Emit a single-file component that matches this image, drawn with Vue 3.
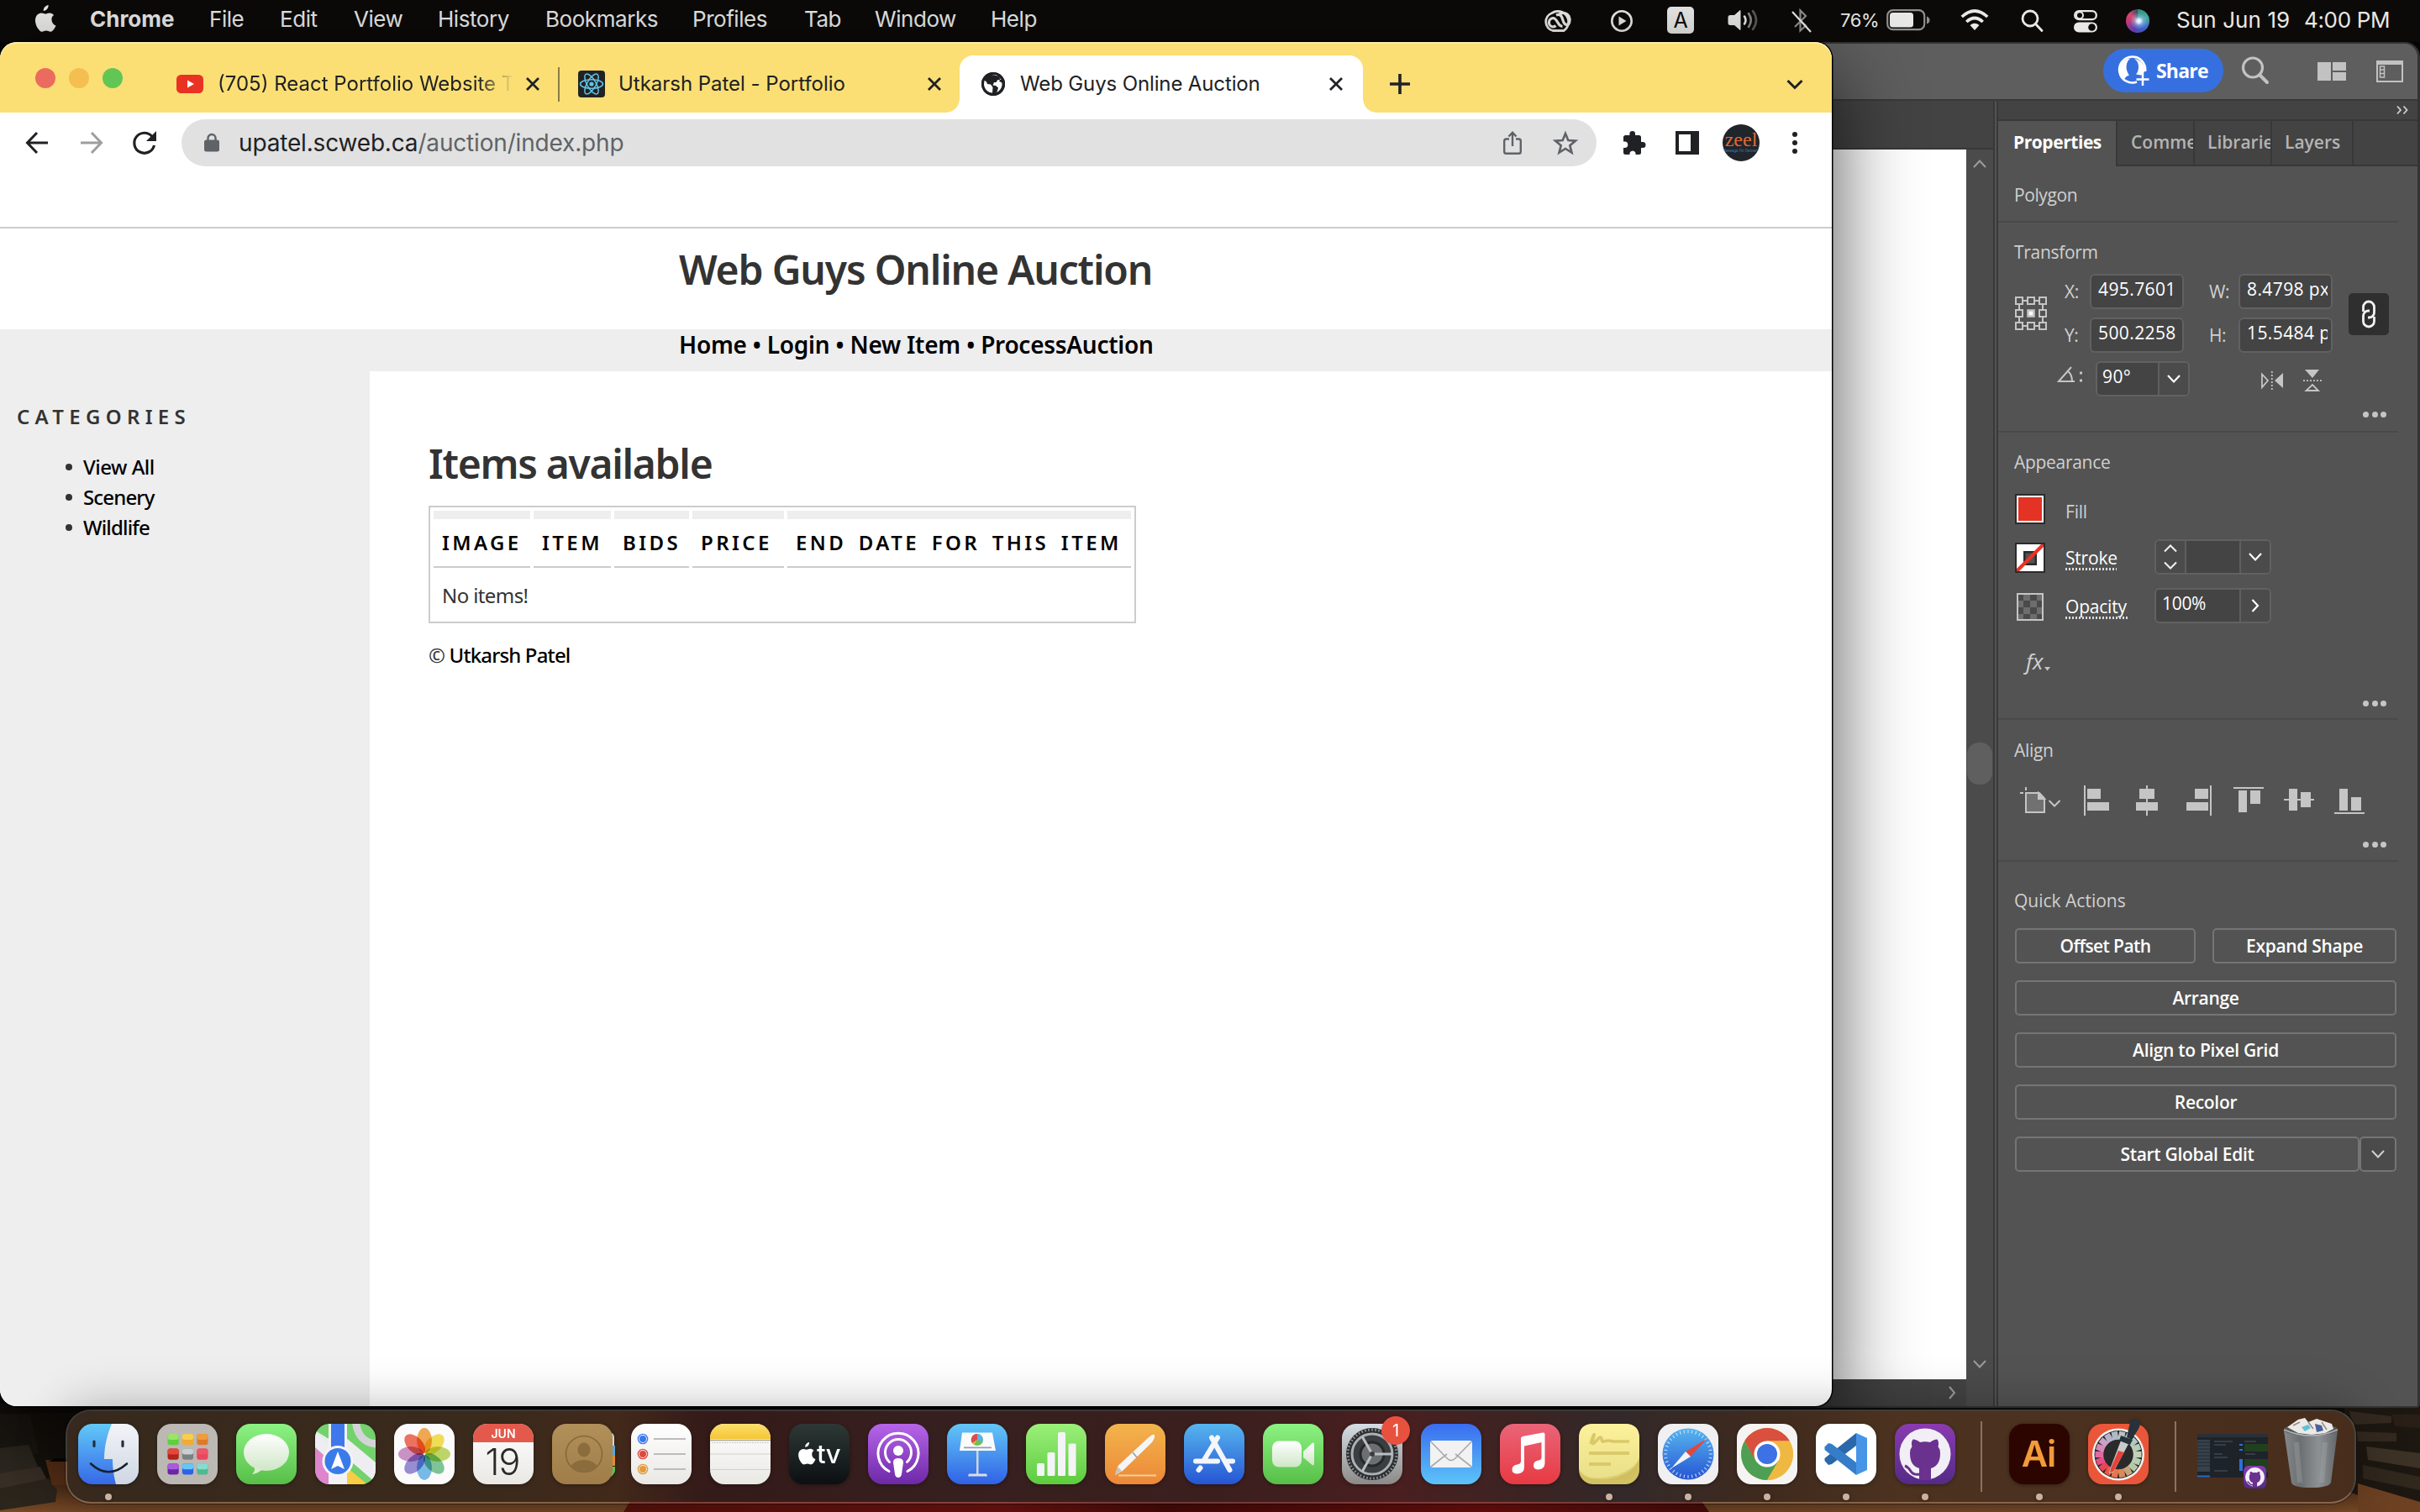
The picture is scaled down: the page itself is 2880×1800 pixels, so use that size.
<script setup>
const menus = ['File', 'Edit', 'View', 'History', 'Bookmarks', 'Profiles', 'Tab', 'Window', 'Help']
const categories = ['View All', 'Scenery', 'Wildlife']
const columns = ['Image', 'Item', 'Bids', 'Price', 'End date for this item']
const actions = ['Arrange', 'Align to Pixel Grid', 'Recolor']
const launchTiles = [
  ['#9be36a', '#5fcf3c'], ['#f6cf4d', '#efab35'], ['#ef9c3c', '#dd7a2c'],
  ['#e5483a', '#b3241b'], ['#c9d0d3', '#7b8083'], ['#ef5566', '#e8485d'],
  ['#a95be0', '#6b25a8'], ['#63c8f5', '#2b62e8'], ['#86dcd0', '#4fb98f'],
]
const petals = ['#f2a03a', '#f3dc3f', '#b8d455', '#6fc08a', '#69b3e8', '#8b7fd0', '#c784c0', '#f0604a']
const ticks = Array.from({ length: 36 }, (_, i) => i * 10)
const teeth = Array.from({ length: 45 }, (_, i) => i * 8)
const wheel = ['#b9c4c6', '#b5c9cf', '#b3c8c0', '#b9cdb9', '#c2d3b8', '#b8cdb4', '#b5c9a8', '#c6a57e', '#d98a5c', '#e8764a', '#ea5a44', '#e8445a', '#e64f86', '#e06aa0', '#d98ab8', '#c9a2c6', '#b9b0c9', '#aebac6']
</script>

<template>
  <div class="desktop">
    <svg class="wall" width="2880" height="130" viewBox="0 0 2880 130">
      <defs>
        <linearGradient id="wood" x1="0" y1="0" x2="0" y2="1"><stop offset="0" stop-color="#4a2c18" /><stop offset="1" stop-color="#7a4b27" /></linearGradient>
        <linearGradient id="rug" x1="0" y1="0" x2="1" y2="0"><stop offset="0" stop-color="#5c120c" /><stop offset=".35" stop-color="#6e1410" /><stop offset=".5" stop-color="#4a0b08" /><stop offset=".8" stop-color="#6a0f0d" /><stop offset="1" stop-color="#4a0d0a" /></linearGradient>
      </defs>
      <rect width="2880" height="130" fill="#120e0a" />
      <rect y="98" width="2880" height="32" fill="url(#wood)" />
      <path d="M750 117H2025L2034 130H742z" fill="url(#rug)" />
      <path d="M0 12H90V98H0z" fill="#17130d" />
      <path d="M0 14H36L46 60 0 66z" fill="#1c1813" />
      <path d="M0 54L34 50 46 78 0 86z" fill="#2e2820" />
      <path d="M0 84L48 76 56 92 0 104z" fill="#3a3127" />
      <path d="M0 102L58 90 68 104 66 118 0 128z" fill="#2d261d" />
      <path d="M54 68H90V98H62z" fill="#5a3118" />
      <path d="M66 66H90V70H58z" fill="#070504" />
      <path d="M2790 6H2880V130H2860L2790 104z" fill="#1d1711" />
      <path d="M2796 10L2846 16V24L2800 26zM2804 34L2852 36V46L2806 46z" fill="#33291f" />
      <path d="M2846 14H2880V30L2850 28z" fill="#291f17" />
      <path d="M2816 52L2880 60V78L2818 68z" fill="#3d3226" />
      <path d="M2812 74L2880 88V104L2812 90z" fill="#30271d" />
      <path d="M2806 96L2880 118V130H2806z" fill="#6d4122" />
    </svg>

    <!-- menu bar -->
    <header class="menubar">
      <svg class="apple" width="26" height="32" viewBox="0 0 26 32"><path fill="#e8e8e6" d="M17.6 0c.3 3.500-2.600 7-5.900 6.900C11.400 3.600 14.500.3 17.600 0zM21.400 16.900c0-3.200 2.400-4.700 2.600-4.900-1.500-2.200-3.800-2.500-4.700-2.600-2.200-.2-4 1.200-5.200 1.200s-2.900-1.200-4.700-1.100C6.900 9.500 4.600 10.900 3.300 13.100.6 17.600 2.600 24.300 5.200 28c1.300 1.800 2.800 3.900 4.800 3.800 1.900-.1 2.600-1.200 5-1.200s3 1.200 5 1.200c2.100 0 3.400-1.800 4.600-3.700 1-1.500 1.300-2.200 1.900-3.700-2.900-1.100-5.100-3.700-5.100-7.500z" /></svg>
      <nav class="menus"><b>Chrome</b><span v-for="m in menus" :key="m">{{ m }}</span></nav>
      <div class="status">
        <svg class="s-cc" width="40" height="30" viewBox="0 0 40 30" fill="none" stroke="#e8e8e6" stroke-width="2.800"><path d="M12 6.500A11.500 11.500 0 1 1 26 27.500H13A11 11 0 0 1 12 6.500z" /><path d="M24.500 22.500C18 22 19 12.500 13 12.500a5.300 5.300 0 0 0 0 10.500c1.500 0 2.500-.5 3.500-1.500M17 9c6-2.500 7 3 8.500 7.500s6 5.500 7.200 1-.5-11-7.200-11c-3 0-5 1.500-6 3" stroke-width="3.200" /></svg>
        <svg class="s-play" width="28" height="28" viewBox="0 0 28 28"><circle cx="14" cy="14" r="11.700" fill="none" stroke="#e8e8e6" stroke-width="2.600" /><path d="M10.500 8.500v11l9-5.500z" fill="#e8e8e6" /></svg>
        <span class="s-a">A</span>
        <svg class="s-vol" width="38" height="28" viewBox="0 0 38 28" fill="none" stroke="#e8e8e6" stroke-width="2.600" stroke-linecap="round"><path d="M1 10q0-1.500 1.500-1.500H8L15 2.500v23L8 19.500H2.500Q1 19.500 1 18z" fill="#e8e8e6" stroke-width="1" /><path d="M20 9.500q3 4.500 0 9" /><path d="M25 6q5.500 8 0 16" stroke="#8a8a88" /><path d="M30 3q8 11 0 22" stroke="#5a5a58" /></svg>
        <svg class="s-bt" width="24" height="30" viewBox="0 0 24 30" fill="none" stroke="#8f8f8d" stroke-width="2.200"><path d="M4 22L17 9 10.500 2.500v24L17 20.500 11 15" /><path d="M1 4L23 28" stroke="#e8e8e6" /></svg>
        <span class="s-pct">76%</span>
        <svg class="s-bat" width="52" height="26" viewBox="0 0 52 26"><rect x="1.200" y="1.200" width="44" height="23" rx="6.500" fill="none" stroke="#8f8f8d" stroke-width="2.200" /><rect x="4" y="4" width="28" height="17.500" rx="3.500" fill="#e8e8e6" /><path d="M48 8.500q3.500 1.500 3.500 4.500t-3.500 4.500z" fill="#8f8f8d" /></svg>
        <svg class="s-wifi" width="34" height="26" viewBox="0 0 34 26" fill="none" stroke="#e8e8e6" stroke-width="3.700"><path d="M1.800 9Q17-5 32.200 9" /><path d="M7.300 15Q17 6 26.700 15" /><path d="M17 25l-5.500-6q5.500-4.500 11 0z" fill="#e8e8e6" stroke="none" /></svg>
        <svg class="s-find" width="28" height="28" viewBox="0 0 28 28" fill="none" stroke="#e8e8e6" stroke-width="2.800" stroke-linecap="round"><circle cx="11" cy="11" r="9" /><path d="M17.500 17.500L25 25.500" /></svg>
        <svg class="s-ctl" width="28" height="27" viewBox="0 0 28 27"><rect x="1.200" y="1.200" width="25.600" height="10" rx="5" fill="none" stroke="#e8e8e6" stroke-width="2.300" /><circle cx="7" cy="6.200" r="4" fill="none" stroke="#e8e8e6" stroke-width="2" /><rect x="0" y="14.500" width="28" height="12" rx="6" fill="#e8e8e6" /><circle cx="21.500" cy="20.500" r="4.300" fill="#0b0a08" /></svg>
        <i class="s-siri"></i>
        <span class="s-date">Sun Jun 19</span><span class="s-time">4:00 PM</span>
      </div>
    </header>

    <!-- illustrator window -->
    <section class="ai">
      <div class="ai-top">
        <button class="share">
          <svg width="38" height="38" viewBox="0 0 38 38" fill="none" stroke="#fff" stroke-width="2.600"><path d="M24 32.500A15.500 15.500 0 1 1 34 20" /><path d="M9 7Q3.500 12 3.500 19.500T9 29.500Q11 25.500 15 24.500 12 21 11.500 15 11.500 7 17 4.500q-5 0-8 2.500zM20 4.500q6 2.500 6 10.500 0 5-3 8.500l6 1Q33.500 22 33.500 17.500 32.500 7 20 4.500z" fill="#fff" stroke="none" /><path d="M31 22v15M23.500 29.500h15" stroke-width="2.500" /></svg>
          Share
        </button>
        <svg class="ai-find" width="34" height="34" viewBox="0 0 34 34" fill="none" stroke="#c2c2c2" stroke-width="3.200" stroke-linecap="round"><circle cx="14" cy="13.500" r="11.500" /><path d="M22 22L31 31" stroke-width="4" /></svg>
        <svg class="ai-lay" width="34" height="22" viewBox="0 0 34 22" fill="#c2c2c2"><path d="M0 0h16v22H0zM18 0h16v10H18zM18 12h16v10H18z" /></svg>
        <svg class="ai-pan" width="32" height="26" viewBox="0 0 32 26"><path d="M1 1h30v24H1z" fill="none" stroke="#c2c2c2" stroke-width="2" /><path d="M0 0h32v5H0z" fill="#c2c2c2" /><path d="M4.500 7h5v13h-5z" fill="none" stroke="#c2c2c2" stroke-width="1.500" /><path d="M4 11h6M4 15.500h6" stroke="#c2c2c2" stroke-width="1.500" /></svg>
      </div>
      <div class="ai-main">
        <div class="doc">
          <div class="doc-tabs"></div>
          <div class="doc-body">
            <div class="canvas"></div>
            <div class="vscroll">
              <svg width="16" height="10" viewBox="0 0 16 10" fill="none" stroke="#9c9c9c" stroke-width="2"><path d="M1 9L8 1.500 15 9" /></svg>
              <i class="thumb"></i>
              <svg width="16" height="10" viewBox="0 0 16 10" fill="none" stroke="#9c9c9c" stroke-width="2"><path d="M1 1L8 8.500 15 1" /></svg>
            </div>
          </div>
          <div class="hscroll"><svg width="9" height="16" viewBox="0 0 9 16" fill="none" stroke="#9c9c9c" stroke-width="2"><path d="M1 1L7 8 1 15" /></svg><i></i></div>
        </div>
        <aside class="props">
          <div class="collapse"><svg width="14" height="10" viewBox="0 0 14 10" fill="none" stroke="#cfcfcf" stroke-width="1.800"><path d="M1 .5L5 5 1 9.500M8.500 .5l4 4.500-4 4.500" /></svg></div>
          <div class="ptabs"><b class="on">Properties</b><b>Comme</b><b>Librarie</b><b>Layers</b><b class="rest"></b></div>

          <div class="sec poly">Polygon</div>

          <div class="sec transform">
            <h3>Transform</h3>
            <div class="tgrid">
              <svg class="refpt" width="38" height="40" viewBox="0 0 38 40" fill="none" stroke="#c5c5c5" stroke-width="2"><path d="M5 5H33V35H5z" /><g fill="#535353"><path d="M1 1h8v8H1zM15 1h8v8h-8zM29 1h8v8h-8zM1 16h8v8H1zM29 16h8v8h-8zM1 31h8v8H1zM15 31h8v8h-8zM29 31h8v8h-8z" /></g><path d="M15.500 16.500h7v7h-7z" fill="#fff" stroke-width="2.500" /></svg>
              <div class="fields">
                <label>X:</label><span class="inp">495.7601</span><label>W:</label><span class="inp"><em>8.4798 px</em></span>
                <label>Y:</label><span class="inp">500.2258</span><label>H:</label><span class="inp"><em>15.5484 p</em></span>
              </div>
              <span class="chain"><svg width="18" height="34" viewBox="0 0 18 34" fill="none" stroke="#f2f2f2" stroke-width="2.800"><path d="M2.500 14V8.500a6.500 6.500 0 0 1 13 0V15a6 6 0 0 1-6 6H8" /><path d="M15.500 20v5.500a6.500 6.500 0 0 1-13 0V19a6 6 0 0 1 6-6H10" /></svg></span>
            </div>
            <div class="trow">
              <svg class="ang" width="30" height="20" viewBox="0 0 30 20" fill="none" stroke="#c5c5c5" stroke-width="2"><path d="M17 1L2 18H21M13 6q5 4 5 12" /><path d="M27 8h3M27 17h3" stroke-width="3" /></svg>
              <span class="inp combo"><span>90°</span><u><svg width="16" height="10" viewBox="0 0 16 10" fill="none" stroke="#fff" stroke-width="2.200"><path d="M1 1L8 8.500 15 1" /></svg></u></span>
              <svg class="flh" width="28" height="24" viewBox="0 0 28 24" fill="none" stroke="#c5c5c5" stroke-width="1.800"><path d="M2 4.500V20L9 12z" /><path d="M27 3V21L17 12z" fill="#c5c5c5" stroke="none" /><path d="M13.800 1V24" stroke-dasharray="2 2" /></svg>
              <svg class="flv" width="24" height="28" viewBox="0 0 24 28" fill="none" stroke="#c5c5c5" stroke-width="1.800"><path d="M3 1H20L12 11z" fill="#c5c5c5" stroke="none" /><path d="M4.500 26H19L12 19z" /><path d="M1 14.200H24" stroke-dasharray="2 2" /></svg>
            </div>
            <div class="more"><i></i><i></i><i></i></div>
          </div>

          <div class="sec appear">
            <h3>Appearance</h3>
            <div class="arow"><svg width="36" height="36" viewBox="0 0 36 36"><path d="M0 0h36v36H0z" fill="#2b2b2b" /><path d="M2 2h32v32H2z" fill="#fff" /><path d="M4 4h28v28H4z" fill="#e43224" /></svg><span class="lbl dim">Fill</span></div>
            <div class="arow"><svg width="36" height="36" viewBox="0 0 36 36"><path d="M0 0h36v36H0z" fill="#2b2b2b" /><path d="M2 2h32v32H2z" fill="#fff" /><path d="M10 10h16v17H10z" fill="#2b2b2b" /><path d="M12.500 12.500h11v12h-11z" fill="#535353" /><path d="M2 34v-3L31 2h3v3L5 34z" fill="#ee3124" /></svg><span class="lbl dot">Stroke</span>
              <span class="inp spin"><u><svg width="16" height="30" viewBox="0 0 16 30" fill="none" stroke="#f2f2f2" stroke-width="2"><path d="M1 8.500L8 1.500 15 8.500M1 21.500L8 28.500 15 21.500" /></svg></u><span></span><u><svg width="16" height="10" viewBox="0 0 16 10" fill="none" stroke="#fff" stroke-width="2.200"><path d="M1 1L8 8.500 15 1" /></svg></u></span></div>
            <div class="arow"><svg width="36" height="36" viewBox="0 0 36 36"><path d="M3 3h30v31H3z" fill="#4a4a4a" stroke="#c5c5c5" stroke-width="2" /><path d="M10 4h8v7h-8zM26 4h6v7h-6zM4 11h6v8H4zM18 11h8v8h-8zM10 19h8v8h-8zM26 19h6v8h-6zM4 27h6v6H4zM18 27h8v6h-8z" fill="#6d6d6d" /></svg><span class="lbl dot wide">Opacity</span>
              <span class="inp opac"><span>100%</span><u><svg width="10" height="16" viewBox="0 0 10 16" fill="none" stroke="#fff" stroke-width="2.200"><path d="M1.500 1L8 8 1.500 15" /></svg></u></span></div>
            <div class="fx"><em>fx</em><svg width="8" height="5" viewBox="0 0 8 5"><path d="M0 0h7L3.500 4.500z" fill="#c5c5c5" /></svg></div>
            <div class="more"><i></i><i></i><i></i></div>
          </div>

          <div class="sec align">
            <h3>Align</h3>
            <div class="icons">
              <svg width="56" height="36" viewBox="0 0 56 36" fill="none" stroke="#c5c5c5" stroke-width="2"><path d="M11 9H27L33 15.500V32H11z" fill="#717171" /><path d="M26 9v7h7z" fill="#c5c5c5" /><path d="M11 2v4M4 9h4M38.500 18L45 24.500 51.500 18" /></svg>
              <svg width="36" height="36" fill="#c5c5c5"><path d="M2 0h2v36H2zM6 4h16v12H6zM6 20h26v10H6z" /></svg>
              <svg width="36" height="36" fill="#c5c5c5"><path d="M16 0h2v36h-2zM8 4h18v12H8zM4 20h26v10H4z" /></svg>
              <svg width="36" height="36" fill="#c5c5c5"><path d="M32 0h2v36h-2zM14 4h16v12H14zM4 20h26v10H4z" /></svg>
              <svg width="36" height="36" fill="#c5c5c5"><path d="M0 2h36v2H0zM6 6h10v26H6zM20 6h12v16H20z" /></svg>
              <svg width="36" height="36" fill="#c5c5c5"><path d="M0 16h36v2H0zM6 4h10v26H6zM20 8h12v18H20z" /></svg>
              <svg width="36" height="36" fill="#c5c5c5"><path d="M0 32h36v2H0zM6 4h10v26H6zM20 14h12v16H20z" /></svg>
            </div>
            <div class="more"><i></i><i></i><i></i></div>
          </div>

          <div class="quick">
            <h3>Quick Actions</h3>
            <div class="qrow"><button class="q1">Offset Path</button><button class="q2">Expand Shape</button></div>
            <button v-for="a in actions" :key="a">{{ a }}</button>
            <div class="qrow split"><button class="q3">Start Global Edit</button><button class="q4"><svg width="16" height="10" viewBox="0 0 16 10" fill="none" stroke="#d0d0d0" stroke-width="2"><path d="M1 1L8 8.500 15 1" /></svg></button></div>
          </div>
        </aside>
      </div>
    </section>

    <!-- chrome window -->
    <section class="chrome">
      <div class="strip">
        <div class="lights"><i></i><i></i><i></i></div>
        <div class="tab t1">
          <svg width="32" height="22" viewBox="0 0 32 22"><rect width="32" height="22" rx="5.500" fill="#ea3223" /><path d="M13 6.500v9l8-4.500z" fill="#fff" /></svg>
          <span class="fade">(705) React Portfolio Website T</span>
          <svg class="x" width="18" height="18" viewBox="0 0 18 18"><path d="M2 2L16 16M16 2L2 16" stroke="#202124" stroke-width="2.800" /></svg>
        </div>
        <div class="tab t2">
          <svg width="32" height="32" viewBox="0 0 32 32" fill="none" stroke="#61c3e6" stroke-width="1.500"><rect width="32" height="32" rx="4" fill="#222" stroke="none" /><ellipse cx="16" cy="16" rx="13.500" ry="5.200" /><ellipse cx="16" cy="16" rx="13.500" ry="5.200" transform="rotate(60 16 16)" /><ellipse cx="16" cy="16" rx="13.500" ry="5.200" transform="rotate(120 16 16)" /><circle cx="16" cy="16" r="2.600" fill="#61c3e6" stroke="none" /></svg>
          <span>Utkarsh Patel - Portfolio</span>
          <svg class="x" width="18" height="18" viewBox="0 0 18 18"><path d="M2 2L16 16M16 2L2 16" stroke="#202124" stroke-width="2.800" /></svg>
        </div>
        <div class="tab t3">
          <svg width="28" height="28" viewBox="0 0 28 28"><circle cx="14" cy="14" r="14" fill="#202124" /><path d="M3.500 9.500L6 11.500l1 2.500 4 .5 2.500 3.500-.5 6.500C8 24.500 3 20 3 14zM12 3.500c4.500-1 9.500 1.500 11.500 5.500L19.500 9l-2 3h-2.500l-1.500 3.500 3.500.5 3 2.500-1 3.500-1 2c4-2 7-6 6.500-11-.5-1-2-2-3.500-2l1.500-3C19.500 3 15 1.500 12 3.500z" fill="#fff" /><circle cx="14" cy="14" r="12.700" fill="none" stroke="#202124" stroke-width="2.600" /></svg>
          <span>Web Guys Online Auction</span>
          <svg class="x" width="18" height="18" viewBox="0 0 18 18"><path d="M2 2L16 16M16 2L2 16" stroke="#202124" stroke-width="2.800" /></svg>
        </div>
        <svg class="plus" width="24" height="24" viewBox="0 0 24 24"><path d="M12 0v24M0 12h24" stroke="#202124" stroke-width="3.600" /></svg>
        <svg class="chev" width="20" height="13" viewBox="0 0 20 13" fill="none" stroke="#202124" stroke-width="3"><path d="M1.500 2L10 10.500 18.500 2" /></svg>
      </div>
      <div class="tools">
        <svg class="b-back" width="28" height="26" viewBox="0 0 28 26" fill="none" stroke="#202124" stroke-width="3"><path d="M14 1L2.500 13 14 25M2.500 13H27" /></svg>
        <svg class="b-fwd" width="28" height="26" viewBox="0 0 28 26" fill="none" stroke="#9e9e9e" stroke-width="3"><path d="M14 1L25.500 13 14 25M25.500 13H1" /></svg>
        <svg class="b-re" width="28" height="28" viewBox="0 0 28 28" fill="none" stroke="#202124" stroke-width="3.200"><path d="M25.500 17A12 12 0 1 1 23 6.500" /><path d="M28 0V12H16z" fill="#202124" stroke="none" /></svg>
        <div class="omni">
          <svg class="lock" width="18" height="22" viewBox="0 0 18 22"><rect x="0" y="7.500" width="18" height="14" rx="2.500" fill="#5f6368" /><path d="M4.500 9V5.500a4.500 4.500 0 0 1 9 0V9" fill="none" stroke="#5f6368" stroke-width="2.400" /></svg>
          <span class="url">upatel.scweb.ca<i>/auction/index.php</i></span>
          <svg class="shr" width="22" height="28" viewBox="0 0 22 28" fill="none" stroke="#5f6368" stroke-width="2.400"><path d="M7 9.500H3.500Q1.200 9.500 1.200 12V24.500Q1.200 26.800 3.500 26.800H18.500Q20.800 26.800 20.800 24.500V12Q20.800 9.500 18.500 9.500H15M11 18V2M6.500 6.500L11 1.700 15.500 6.500" /></svg>
          <svg class="star" width="30" height="28" viewBox="0 0 30 28" fill="none" stroke="#5f6368" stroke-width="2.600"><path d="M15 3L18.300 11 27 11.600 20.300 17.200 22.500 25.600 15 21 7.500 25.600 9.700 17.200 3 11.600 11.700 11z" /></svg>
        </div>
        <svg class="puz" width="28" height="28" viewBox="0 0 28 28" fill="#202124"><path d="M25 13H23V7.500Q23 5 20.500 5H16V3.300a3.300 3.300 0 0 0-6.600 0V5H4.500Q2 5 2 7.500V12.500H3.500a3.700 3.700 0 0 1 0 7.500H2v5.500Q2 28 4.500 28H9.500V26a3.700 3.700 0 0 1 7 0v2h4Q23 28 23 25.500V20h2a3.500 3.500 0 0 0 0-7z" /></svg>
        <svg class="side" width="28" height="28" viewBox="0 0 28 28"><path fill="#202124" fill-rule="evenodd" d="M0 0h28v28H0zM4 4v20h14V4z" /></svg>
        <span class="ava"><b>zeel</b><i>Massage On Demand</i></span>
        <svg class="kebab" width="6" height="28" viewBox="0 0 6 28" fill="#202124"><circle cx="3" cy="4" r="3" /><circle cx="3" cy="14" r="3" /><circle cx="3" cy="24" r="3" /></svg>
      </div>
      <div class="bookmarks"></div>
      <div class="page">
        <h1>Web Guys Online Auction</h1>
        <nav><a>Home</a> • <a>Login</a> • <a>New Item</a> • <a>ProcessAuction</a></nav>
        <div class="cols">
          <aside>
            <h4>CATEGORIES</h4>
            <ul><li v-for="c in categories" :key="c">{{ c }}</li></ul>
          </aside>
          <main>
            <h2>Items available</h2>
            <div class="table">
              <div class="thead"><b v-for="c in columns" :key="c">{{ c.toUpperCase() }}</b></div>
              <div class="empty">No items!</div>
            </div>
            <footer>© <a>Utkarsh Patel</a></footer>
          </main>
        </div>
      </div>
    </section>

    <!-- dock -->
    <div class="dock">
      <svg width="0" height="0" class="defs"><defs>
        <linearGradient id="gFinder" x1="0" y1="0" x2="0" y2="1"><stop offset="0" stop-color="#62c9f7" /><stop offset="1" stop-color="#3668e8" /></linearGradient>
        <linearGradient id="gFace" x1="0" y1="0" x2="0" y2="1"><stop offset="0" stop-color="#f3f4f8" /><stop offset="1" stop-color="#cdd7e3" /></linearGradient>
        <linearGradient id="gGreen" x1="0" y1="0" x2="0" y2="1"><stop offset="0" stop-color="#8cf383" /><stop offset="1" stop-color="#57be48" /></linearGradient>
        <linearGradient id="gWhite" x1="0" y1="0" x2="0" y2="1"><stop offset="0" stop-color="#fff" /><stop offset="1" stop-color="#cfe6c6" /></linearGradient>
        <linearGradient id="gPaper" x1="0" y1="0" x2="0" y2="1"><stop offset="0" stop-color="#fff" /><stop offset="1" stop-color="#e9e8e4" /></linearGradient>
        <linearGradient id="gBrown" x1="0" y1="0" x2="0" y2="1"><stop offset="0" stop-color="#b1905a" /><stop offset="1" stop-color="#a07d48" /></linearGradient>
        <linearGradient id="gYellow" x1="0" y1="0" x2="0" y2="1"><stop offset="0" stop-color="#fbdf6d" /><stop offset="1" stop-color="#f5c534" /></linearGradient>
        <linearGradient id="gTv" x1="0" y1="0" x2="0" y2="1"><stop offset="0" stop-color="#2d3835" /><stop offset="1" stop-color="#0c0f12" /></linearGradient>
        <linearGradient id="gPod" x1="0" y1="0" x2="0" y2="1"><stop offset="0" stop-color="#b765e8" /><stop offset="1" stop-color="#6d28a8" /></linearGradient>
        <linearGradient id="gKey" x1="0" y1="0" x2="0" y2="1"><stop offset="0" stop-color="#62c7f8" /><stop offset="1" stop-color="#3061e6" /></linearGradient>
        <linearGradient id="gNum" x1="0" y1="0" x2="0" y2="1"><stop offset="0" stop-color="#9bf07a" /><stop offset="1" stop-color="#5dcb3e" /></linearGradient>
        <linearGradient id="gPages" x1="0" y1="0" x2="0" y2="1"><stop offset="0" stop-color="#f3b44c" /><stop offset="1" stop-color="#ec8838" /></linearGradient>
        <linearGradient id="gStore" x1="0" y1="0" x2="0" y2="1"><stop offset="0" stop-color="#56b5ee" /><stop offset="1" stop-color="#2655d4" /></linearGradient>
        <linearGradient id="gSet" x1="0" y1="0" x2="0" y2="1"><stop offset="0" stop-color="#d6dde4" /><stop offset="1" stop-color="#8c8a87" /></linearGradient>
        <linearGradient id="gMail" x1="0" y1="0" x2="0" y2="1"><stop offset="0" stop-color="#3a6df0" /><stop offset="1" stop-color="#5cc4f8" /></linearGradient>
        <linearGradient id="gMusic" x1="0" y1="0" x2="0" y2="1"><stop offset="0" stop-color="#ea6478" /><stop offset="1" stop-color="#e73a42" /></linearGradient>
        <linearGradient id="gNote" x1="0" y1="0" x2="0" y2="1"><stop offset="0" stop-color="#fdf19c" /><stop offset="1" stop-color="#e9df88" /></linearGradient>
        <linearGradient id="gGit" x1="0" y1="0" x2="0" y2="1"><stop offset="0" stop-color="#8a3bb0" /><stop offset="1" stop-color="#542a86" /></linearGradient>
        <linearGradient id="gCan" x1="0" y1="0" x2="1" y2="0"><stop offset="0" stop-color="#85898b" /><stop offset=".3" stop-color="#6b6f71" /><stop offset=".65" stop-color="#8d9193" /><stop offset="1" stop-color="#63676a" /></linearGradient>
        <clipPath id="sq"><rect width="72" height="72" rx="17" /></clipPath>
      </defs></svg>

      <div class="app run"><svg viewBox="0 0 72 72"><g clip-path="url(#sq)"><path d="M0 0h72v72H0z" fill="url(#gFinder)" /><path d="M40 0C34 14 31 28 31 42H41C41 54 43 64 45 72H72V0z" fill="url(#gFace)" /></g><path d="M19 21v5.500M53 21v5.500" stroke="#23303c" stroke-width="3.200" stroke-linecap="round" /><path d="M15 47.500Q36 67 58 47.500" fill="none" stroke="#18212c" stroke-width="2.600" stroke-linecap="round" /></svg></div>
      <div class="app"><svg viewBox="0 0 72 72"><rect width="72" height="72" rx="17" fill="#bcb8b4" /><g v-for="(c, i) in launchTiles" :key="i"><rect :x="12.500 + (i % 3) * 17.400" :y="12 + Math.floor(i / 3) * 17.600" width="13.200" height="13.200" rx="3" :fill="c[1]" /><rect :x="12.500 + (i % 3) * 17.400" :y="12 + Math.floor(i / 3) * 17.600" width="13.200" height="7" rx="3" :fill="c[0]" /></g></svg></div>
      <div class="app"><svg viewBox="0 0 72 72"><rect width="72" height="72" rx="17" fill="url(#gGreen)" /><ellipse cx="36" cy="34" rx="27" ry="22" fill="url(#gWhite)" /><path d="M22 51q1 5-3 9 8-1 12-6z" fill="#d8ecd0" /></svg></div>
      <div class="app"><svg viewBox="0 0 72 72"><g clip-path="url(#sq)"><path d="M0 0h72v72H0z" fill="#74d26c" /><path d="M0 28L20 46V72H0z" fill="#dd85cd" /><path d="M0 8L72 70V46L36 16V30L0 8z" fill="#eeeef2" /><path d="M0 8L20 25V46L0 28z" fill="#eeeef2" /><path d="M38 52L62 72H30z" fill="#f6cd45" /><path d="M16 0h22v72H16z" fill="#f2f2f5" /><path d="M19 0h16v44H19z" fill="#3f78ea" /><path d="M48-6Q50 26 80 24" fill="none" stroke="#d3d4d8" stroke-width="9" /></g><circle cx="27" cy="44.500" r="18.500" fill="#f4f4f6" /><circle cx="27" cy="44.500" r="15.500" fill="#3a7bea" /><path d="M27 33L35 54 27 50 19 54z" fill="#fff" /></svg></div>
      <div class="app"><svg viewBox="0 0 72 72"><rect width="72" height="72" rx="17" fill="#fbfbfb" /><g class="petals"><ellipse v-for="(c, i) in petals" :key="c" cx="36" cy="20" rx="9" ry="15" :fill="c" :transform="`rotate(${i * 45} 36 36)`" /></g></svg></div>
      <div class="app"><svg viewBox="0 0 72 72"><g clip-path="url(#sq)"><path d="M0 0h72v72H0z" fill="url(#gPaper)" /><path d="M0 0h72v22H0z" fill="#e35a4d" /></g><text x="36" y="17" text-anchor="middle" font-size="14" font-weight="600" fill="#fff">JUN</text><text x="35" y="61" text-anchor="middle" font-size="43" font-weight="300" letter-spacing="-1" fill="#2a2a2a">19</text></svg></div>
      <div class="app"><svg viewBox="0 0 76 72"><path d="M66 10q8 0 8 6v10h-8z" fill="#d2d2d2" /><path d="M66 26h9v12h-9z" fill="#5aa6dc" /><path d="M66 38h9v12h-9z" fill="#e58b32" /><path d="M66 51h9v5q-2 7-9 8z" fill="#5cc653" /><rect width="72" height="72" rx="17" fill="url(#gBrown)" /><circle cx="38" cy="36" r="21.500" fill="none" stroke="#87683a" stroke-width="1.600" /><ellipse cx="38" cy="31" rx="7.500" ry="8.500" fill="#8b6c3d" /><path d="M22 51q5-8 16-8t16 8q-6 7-16 7t-16-7z" fill="#8b6c3d" /></svg></div>
      <div class="app"><svg viewBox="0 0 72 72"><rect width="72" height="72" rx="17" fill="url(#gPaper)" /><g fill="none" stroke-width="1.400"><circle cx="14" cy="18" r="5.600" stroke="#3a78f0" /><circle cx="14" cy="36" r="5.600" stroke="#dc4a3e" /><circle cx="14" cy="54" r="5.600" stroke="#e39a3c" /></g><circle cx="14" cy="18" r="4" fill="#3a78f0" /><circle cx="14" cy="36" r="4" fill="#dc4a3e" /><circle cx="14" cy="54" r="4" fill="#e39a3c" /><path d="M27 18H65M27 36H65M27 54H65" stroke="#bcbcbe" stroke-width="1.800" /></svg></div>
      <div class="app"><svg viewBox="0 0 72 72"><g clip-path="url(#sq)"><path d="M0 0h72v72H0z" fill="url(#gPaper)" /><path d="M0 0h72v18H0z" fill="url(#gYellow)" /></g><path d="M0 19.500H72" stroke="#a9a59c" stroke-width="1.600" /><path d="M2 22.500H70" stroke="#bdbab4" stroke-dasharray="1.500 1.500" /><path d="M0 36H72M0 54.500H72" stroke="#d2d0cc" stroke-width="1.200" /></svg></div>
      <div class="app"><svg viewBox="0 0 72 72"><rect width="72" height="72" rx="17" fill="url(#gTv)" /><g transform="translate(9.500 22) scale(.83)"><path fill="#fff" d="M17.600 0c.3 3.500-2.600 7-5.900 6.900C11.400 3.600 14.500.3 17.600 0zM21.400 16.900c0-3.200 2.400-4.700 2.600-4.900-1.500-2.200-3.800-2.500-4.700-2.600-2.200-.2-4 1.200-5.200 1.200s-2.900-1.200-4.700-1.100C6.900 9.500 4.600 10.900 3.300 13.100.6 17.600 2.600 24.300 5.200 28c1.300 1.800 2.800 3.900 4.800 3.800 1.900-.1 2.600-1.200 5-1.200s3 1.200 5 1.200c2.100 0 3.400-1.800 4.600-3.700 1-1.500 1.300-2.200 1.900-3.700-2.900-1.100-5.100-3.700-5.100-7.500z" /></g><text x="33" y="47" font-size="31" font-weight="500" fill="#fff" letter-spacing="-.5">tv</text></svg></div>
      <div class="app"><svg viewBox="0 0 72 72"><rect width="72" height="72" rx="17" fill="url(#gPod)" /><g fill="none" stroke="#fff" stroke-width="3" stroke-linecap="round"><path d="M25 56.500A24 24 0 1 1 47 56.500" /><path d="M25.500 45.500A15.500 15.500 0 1 1 46.500 45.500" /></g><circle cx="36" cy="32" r="6" fill="#fff" /><path d="M30 46q0-5 6-5t6 5l-2 14q-.8 4-4 4t-4-4z" fill="#fff" /></svg></div>
      <div class="app"><svg viewBox="0 0 72 72"><rect width="72" height="72" rx="17" fill="url(#gKey)" /><path d="M35 31h2.500v30H35z" fill="#cfd6de" /><path d="M26 59.500h21l1 3H25z" fill="#d9dde2" /><path d="M18 10.500h36L58 32H15z" fill="#fbfbfc" /><path d="M20 27.500H53v1.800H20z" fill="#8fa0b2" /><circle cx="36" cy="19" r="7" fill="#6cc05a" /><path d="M36 19V12a7 7 0 0 1 6.500 9z" fill="#5ab2e8" /><path d="M36 19L30 23A7 7 0 0 1 36 12z" fill="#dd4a52" /><path d="M36 19L30 23 32 25z" fill="#f2b53a" /></svg></div>
      <div class="app"><svg viewBox="0 0 72 72"><rect width="72" height="72" rx="17" fill="url(#gNum)" /><g fill="#f3f4f6"><rect x="13" y="47" width="9" height="15" rx="1.500" /><rect x="25.500" y="34" width="9" height="28" rx="1.500" /><rect x="38" y="10" width="9" height="52" rx="1.500" /><rect x="50.500" y="23.500" width="9" height="38.500" rx="1.500" /></g></svg></div>
      <div class="app"><svg viewBox="0 0 72 72"><rect width="72" height="72" rx="17" fill="url(#gPages)" /><path d="M16 60.500H61v2H16z" fill="#f6cf9a" /><path d="M12 61L15.500 50 51 17Q58 11 59 13.500T56 22L21 56z" fill="#f5f5f5" /><path d="M12 61L15 51 20 56z" fill="#c9c3b8" /><path d="M33 34L38 40" stroke="#9b9b9b" stroke-width="1.600" /></svg></div>
      <div class="app"><svg viewBox="0 0 72 72"><rect width="72" height="72" rx="17" fill="url(#gStore)" /><g stroke="#f4f6fa" stroke-width="6" stroke-linecap="round"><path d="M40 16.500L24 43M33 16.500L54.500 55M14 44.500H40M51 44.500H58M19.500 52.500L17.500 55" /></g></svg></div>
      <div class="app"><svg viewBox="0 0 72 72"><rect width="72" height="72" rx="17" fill="url(#gGreen)" /><rect x="11" y="20.500" width="35" height="31" rx="8" fill="url(#gWhite)" /><path d="M48 33L58 23.500Q61 21 61 25V47Q61 51 58 48.500L48 40z" fill="url(#gWhite)" /></svg></div>
      <div class="app"><svg viewBox="0 0 72 72"><rect width="72" height="72" rx="17" fill="url(#gSet)" /><circle cx="36" cy="36" r="31" fill="#2c2e30" /><path v-for="t in teeth" :key="t" d="M36 5.500v3" stroke="#8f9498" stroke-width="1.600" :transform="`rotate(${t} 36 36)`" /><circle cx="36" cy="36" r="24" fill="#3c3f41" stroke="#aab0b5" stroke-width="3" /><circle cx="36" cy="36" r="14" fill="#6c6f72" stroke="#26282a" stroke-width="3" /><path d="M36 36H60M36 36L24 15M36 36L24 57" stroke="#b9bfc4" stroke-width="3" /><circle cx="36" cy="36" r="3" fill="#3a3c3e" /></svg><em class="badge">1</em></div>
      <div class="app"><svg viewBox="0 0 72 72"><rect width="72" height="72" rx="17" fill="url(#gMail)" /><rect x="11" y="20" width="50" height="32" rx="3" fill="#f2f2f2" /><path d="M12 51L31 36M60 51L41 36M12 21.500L31 41q5 5 10 0L60 21.500" fill="none" stroke="#a9a9ab" stroke-width="1.600" /></svg></div>
      <div class="app"><svg viewBox="0 0 72 72"><rect width="72" height="72" rx="17" fill="url(#gMusic)" /><path d="M25 17.500Q25 15.500 27 15L51 10.500Q53.500 10 53.500 12.500V46.500Q53.500 54 46 54.500 40 54.500 40 49.500 40 44.500 46 43.500 49.500 43 49.500 40V22L29 26.500V51.500Q29 59 21 59.500 14.500 59.500 14.500 54.500 14.500 49.500 20.500 48.500 25 48 25 44.500z" fill="#fff" /></svg></div>
      <div class="app run"><svg viewBox="0 0 72 72"><rect width="72" height="72" rx="17" fill="#d2c262" /><path d="M0 48V17Q0 0 17 0H55Q72 0 72 17V40Q70 52 54 60T22 66Q2 66 0 52z" fill="url(#gNote)" /><path d="M2 56q5 9 20 8.500 18 0 32-7T71 42q-1 22-18 25H20Q4 67 2 56z" fill="#cdbd5c" opacity=".55" /><path d="M14 24c2-8 5-14 4-10s-4 12 0 9 6-8 8-7 0 6 4 5 6-2 10 0h20" fill="none" stroke="#d9c96a" stroke-width="3.600" /><path d="M12 35H60M12 48H38" stroke="#d9c96a" stroke-width="4" /></svg></div>
      <div class="app run"><svg viewBox="0 0 72 72"><rect width="72" height="72" rx="17" fill="#f0f0f2" /><circle cx="36" cy="36" r="30.500" fill="url(#gStore)" /><path v-for="t in ticks" :key="t" d="M36 7v4" stroke="#cfe2f8" stroke-width="1" :transform="`rotate(${t} 36 36)`" /><path d="M58 18L33 33 39 39z" fill="#e0483c" /><path d="M16 53L33 33 39 39z" fill="#f4f4f4" /></svg></div>
      <div class="app run"><svg viewBox="0 0 72 72"><rect width="72" height="72" rx="17" fill="#f5f4f3" /><circle cx="36" cy="36" r="31" fill="#efb941" /><path d="M9.200 20.500A31 31 0 0 1 62.800 20.500H36L22 44z" fill="#d9503f" /><path d="M9.200 20.500A31 31 0 0 0 36 67L50 43.500 22 43.500z" fill="#4e9f54" /><path d="M36 20.500H62.800A31 31 0 0 1 36 67L49.500 44z" fill="#efb941" /><circle cx="36" cy="36" r="15.500" fill="#fff" /><circle cx="36" cy="36" r="12" fill="#3e72e4" /></svg></div>
      <div class="app run"><svg viewBox="0 0 72 72"><rect width="72" height="72" rx="17" fill="#fff" /><path d="M48 11L61 17V55L48 61z" fill="#4795e6" /><path d="M48 11V26L19 48 15 49 10.500 44V41z" fill="#2b67ab" /><path d="M48 61V46L19 24 15 23 10.500 27.500V31z" fill="#357dc8" /></svg></div>
      <div class="app run"><svg viewBox="0 0 72 72"><rect width="72" height="72" rx="17" fill="url(#gGit)" /><circle cx="36" cy="36" r="30.500" fill="#f1eff5" /><path d="M29 67V53Q18 50 18 35 18 30 20.500 27 19 22 21.500 18.500 26 18.500 30 22q6-1.500 12 0 4-3.500 8.500-3.500 2.500 3.500 1 8.500 2.500 3 2.500 8 0 15-11 18V67z" fill="#6b318f" /><path d="M30 60q-8 1.500-11-3.500T12 50" fill="none" stroke="#6b318f" stroke-width="3" /></svg></div>

      <i class="bar b1"></i>
      <div class="app run"><svg viewBox="0 0 72 72"><rect width="72" height="72" rx="17" fill="#2c0500" /><text x="35" y="51" text-anchor="middle" font-size="43" font-weight="600" fill="#f29b38" letter-spacing="-1">Ai</text></svg></div>
      <div class="app run"><svg viewBox="0 0 72 72"><rect width="72" height="72" rx="17" fill="#ea5639" /><circle cx="36" cy="36.500" r="31" fill="#f4f3f1" /><circle cx="36" cy="36.500" r="28.500" fill="#242424" /><path v-for="(c, i) in wheel" :key="i" d="M36 9V19" :stroke="c" stroke-width="7.400" :transform="`rotate(${i * 20 + 10} 36 36.500)`" /><circle cx="36" cy="36.500" r="17.500" fill="#2a2a2a" /><path d="M39 20L48 24 30 58 25 59 26 54z" fill="#c9cbcd" /><path d="M36 32L43 34 30 57 26 58 27 53z" fill="#e4433a" /><path d="M39 14L53 19 50 25 37 20z" fill="#26323c" /><path d="M46 16L50-2Q54-8 59-5T60 6L52 19z" fill="#26323c" /></svg></div>
      <i class="bar b2"></i>
      <div class="mini">
        <svg width="84" height="52" viewBox="0 0 84 52"><path d="M0 0h84v52H0z" fill="#1e232a" /><path d="M0 0h84v4H0z" fill="#2a3038" /><path d="M0 7h15v38H0z" fill="#39414c" /><path d="M0 10h15M0 14h15M0 18h15M0 22h15M0 26h15M0 30h15M0 34h15M0 38h15" stroke="#232930" /><path d="M0 49.500h15v2H0z" fill="#2b6bd0" /><path d="M56 12h28v9H56zM56 30h28v16H56z" fill="#20401f" /><path d="M50 12h4v2h-4zM50 18h4v2h-4zM50 30h4v14h-4z" fill="#2f6fd6" /><path d="M20 9h22M20 13h14M20 24h10M20 28h16M20 44h16M56 9h14M57 24h12" stroke="#5c6570" stroke-width=".8" /></svg>
        <svg class="gh" width="27" height="27" viewBox="0 0 72 72"><rect width="72" height="72" rx="17" fill="url(#gGit)" /><circle cx="36" cy="36" r="30.500" fill="#f1eff5" /><path d="M29 67V53Q18 50 18 35 18 30 20.500 27 19 22 21.500 18.500 26 18.500 30 22q6-1.500 12 0 4-3.500 8.500-3.500 2.500 3.500 1 8.500 2.500 3 2.500 8 0 15-11 18V67z" fill="#6b318f" /><path d="M30 60q-8 1.500-11-3.500T12 50" fill="none" stroke="#6b318f" stroke-width="4" /></svg>
      </div>
      <svg class="trash" width="66" height="86" viewBox="0 0 66 86"><path d="M1 16Q33 28 65 16L57 78Q54 84 33 84T10 78z" fill="url(#gCan)" /><ellipse cx="33" cy="15" rx="32" ry="7" fill="#585b5d" /><path d="M5 12L18 3 26 1 30 6 40 2 46 4 58 8 60 14 50 19 34 21 18 19z" fill="#eceae6" /><path d="M22 12l8-3 3 4-7 4z" fill="#5ec2d8" /><path d="M38 8l8 2 2 6-8 2z" fill="#4c5f9a" /><path d="M12 10l8-4M30 6l6 8M46 6l6 9" stroke="#8e8c88" stroke-width="1.500" /><path d="M1 15Q33 29 65 15" fill="none" stroke="#aeb2b4" stroke-width="1.600" /><path d="M16 30L20 78M50 30L46 78" stroke="#a4a8aa" stroke-opacity=".35" stroke-width="6" /></svg>
    </div>
  </div>
</template>

<style>
body { background: #000; overflow: hidden; }
</style>
<style scoped>
* { box-sizing: border-box; }
.desktop { position: relative; width: 2880px; height: 1800px; overflow: hidden; background: #050505; font-family: Inter, "Liberation Sans", sans-serif; }
svg { display: block; flex: none; overflow: visible; }
i { font-style: normal; }
h1, h2, h3, h4, ul { margin: 0; padding: 0; font-weight: inherit; font-size: inherit; }
button { font: inherit; color: inherit; border: 0; background: none; padding: 0; }
.wall { position: absolute; left: 0; bottom: 0; overflow: hidden; }

.menubar { display: flex; align-items: center; height: 50px; background: #0b0a08; color: #e8e8e6; font-size: 26px; padding-left: 40px; }
.apple { margin: -6px 41px 0 0; }
.menus { display: grid; grid-template-columns: 142px 84px 88px 100px 128px 175px 133px 84px 138px 60px; width: 1729px; line-height: 46px; height: 50px; letter-spacing: -.45px; }
.menus b { letter-spacing: 0; }
.status { display: flex; align-items: center; height: 50px; padding-bottom: 3px; }
.s-cc { margin-left: -1px; }
.s-play { margin: 3px 0 0 41px; }
.s-a { width: 32px; height: 32px; margin: 1px 0 0 40px; border-radius: 5px; background: #e8e8e6; color: #0b0a08; text-align: center; line-height: 32px; font-size: 25px; }
.s-vol { margin: 1px 0 0 40px; }
.s-bt { margin: 3px 0 0 38px; }
.s-pct { width: 55px; margin-left: 34px; font-size: 22px; letter-spacing: -.4px; }
.s-wifi { margin-left: 36px; }
.s-find { margin: 2px 0 0 38px; }
.s-ctl { margin: 4px 0 0 35px; }
.s-siri { width: 28px; height: 28px; margin: 2px 0 0 34px; border-radius: 50%; background: radial-gradient(circle at 55% 50%, #e8f4ff 0 8%, rgba(150, 200, 240, .5) 26%, transparent 50%), conic-gradient(#2f8f7a, #49a8a0 70deg, #3a5fd0 140deg, #5a3fae 200deg, #c23a7a 270deg, #d8486a 310deg, #3a4a6a); }
.s-date { width: 145px; margin-left: 32px; letter-spacing: .1px; white-space: nowrap; }
.s-time { margin-left: 7px; letter-spacing: -.35px; }

/* illustrator */
.ai { position: absolute; left: 2100px; top: 50px; width: 780px; height: 1626px; display: flex; flex-direction: column; background: #3a3a3a; border-radius: 0 18px 4px 0; border: 2px solid #333; border-width: 2px 3px 2px 0; overflow: hidden; font-family: "Open Sans", "Noto Sans", sans-serif; color: #d0d0d0; font-size: 21px; }
.ai-top { display: flex; align-items: center; height: 66px; background: #5e5e5e; padding: 0 0 2px 403px; }
.share { display: flex; align-items: center; width: 143px; height: 52px; border-radius: 26px; background: #3670e0; color: #fff; font-weight: 700; font-size: 23px; letter-spacing: -.8px; padding-left: 16px; gap: 9px; }
.ai-find { margin-left: 21px; }
.ai-lay { margin-left: 57px; margin-top: 2px; }
.ai-pan { margin-left: 36px; margin-top: 2px; }
.ai-main { display: flex; flex: 1; border-top: 2px solid #383838; }
.doc { width: 272px; display: flex; flex-direction: column; background: #434343; }
.doc-tabs { height: 58px; border-bottom: 2px solid #383838; }
.doc-body { display: flex; height: 1464px; }
.canvas { width: 240px; background: #fff; }
.vscroll { width: 32px; background: #4b4b4b; display: flex; flex-direction: column; align-items: center; padding: 12px 0 0; }
.thumb { width: 30px; height: 50px; border-radius: 14px; background: #5f5f5f; margin: 684px 0 685px; }
.hscroll { flex: 1; display: flex; align-items: center; justify-content: space-between; padding-left: 219px; }
.hscroll i { width: 32px; height: 100%; background: #4b4b4b; }
.props { width: 504px; background: #535353; border-left: 6px double #393939; display: flex; flex-direction: column; flex: 1; }
.collapse { height: 24px; background: #434343; border-bottom: 2px solid #383838; display: flex; justify-content: flex-end; align-items: center; padding-right: 11px; }
.ptabs { display: flex; height: 54px; line-height: 50px; color: #b4b4b4; }
.ptabs b { width: 92px; padding-left: 15px; background: #434343; border: solid #383838; border-width: 0 2px 2px 0; overflow: hidden; white-space: nowrap; font-weight: 600; }
.ptabs b.on { width: 142px; padding-left: 18px; background: #535353; border-bottom: 0; color: #fff; font-weight: 700; letter-spacing: -.45px; }
.ptabs b:nth-child(2) { padding-left: 16px; }
.ptabs b:nth-child(4) { width: 97px; }
.ptabs b.rest { flex: 1; border-right: 0; }
.sec { padding-left: 20px; position: relative; }
.sec::after { content: ""; position: absolute; left: 0; bottom: 0; width: 476px; height: 2px; background: #4a4a4a; }
.poly { height: 67px; line-height: 68px; letter-spacing: -.4px; padding-left: 19px; }
h3 { line-height: 62px; height: 61px; letter-spacing: -.3px; margin-left: -1px; }
.transform { height: 250px; padding-top: 4px; }
.transform h3 { margin-bottom: -4px; line-height: 63px; }
.tgrid { display: flex; height: 94px; }
.refpt { margin: 27px 21px 0 0; }
.fields { display: grid; grid-template-columns: 30px 112px 30px 35px 112px; grid-template-rows: 42px 42px; row-gap: 10px; width: 338px; }
.fields label { line-height: 42px; letter-spacing: -.5px; }
.fields label:nth-of-type(even) { grid-column: 4; }
.chain { width: 48px; height: 50px; margin-top: 23px; border-radius: 5px; background: #2f2f2f; display: flex; align-items: center; justify-content: center; }
.inp { display: flex; height: 42px; border: 2px solid #616161; border-radius: 6px; background: #444; color: #fff; line-height: 33px; padding-left: 8px; overflow: hidden; white-space: nowrap; letter-spacing: .4px; font-weight: 500; }
.inp em { font-style: normal; width: 96px; overflow: hidden; }
.inp u { text-decoration: none; background: #4b4b4b; width: 36px; border-left: 2px solid #5f5f5f; display: flex; align-items: center; justify-content: center; }
.trow { display: flex; margin-top: 10px; height: 42px; }
.ang { margin: 6px 16px 0 50px; }
.combo { width: 112px; padding-left: 6px; }
.combo span { width: 67px; }
.flh { margin: 11px 0 0 84px; }
.flv { margin: 9px 0 0 22px; }
.more { display: flex; gap: 3.500px; height: 43px; align-items: center; padding-left: 414px; }
.more i { width: 7px; height: 7px; border-radius: 50%; background: #c5c5c5; }
.appear { height: 342px; padding-top: 4px; }
.appear h3 { margin-bottom: -3px; line-height: 63px; }
.arow { display: flex; align-items: center; height: 58px; }
.lbl { margin-left: 24px; width: 106px; color: #fff; font-weight: 500; letter-spacing: -.2px; line-height: 22px; }
.dim { color: #d0d0d0; padding-top: 5px; }
.dot { position: relative; }
.dot::after { content: ""; position: absolute; left: 0; bottom: -4px; width: 61px; height: 3px; background: repeating-linear-gradient(90deg, #ddd 0 2px, transparent 2px 4px); }
.dot.wide::after { width: 74px; }
.spin, .opac { width: 139px; margin-top: -2px; padding: 0; }
.spin u:first-child { border-left: 0; border-right: 2px solid #5f5f5f; }
.spin span { flex: 1; }
.opac span { flex: 1; padding-left: 7px; letter-spacing: -.3px; }
.fx { display: flex; height: 65px; padding: 6px 0 0 13px; align-items: center; font-size: 26px; gap: 1px; }
.fx svg { margin-top: 20px; }
.align { height: 169px; padding-top: 4px; }
.align h3 { line-height: 65px; }
.icons { display: flex; gap: 24px; height: 36px; margin-top: 13px; padding-left: 2px; }
.icons svg:first-child { margin-right: -2px; }
.align .more { margin-top: 14px; height: 40px; }
.quick { padding: 9px 25px 0 20px; display: flex; flex-direction: column; gap: 20px; }
.quick h3 { height: 50px; line-height: 74px; margin: 0 0 0 -1px; letter-spacing: 0; }
.quick button { height: 42px; border: 2px solid #757575; border-radius: 5px; color: #fff; font-weight: 600; letter-spacing: -.3px; line-height: 36px; }
.qrow { display: flex; gap: 20px; }
.split { gap: 0; }
.quick .q1 { width: 215px; letter-spacing: -.6px; }
.quick .q2 { flex: 1; }
.quick .q3 { flex: 1; }
.quick .q4 { width: 44px; display: flex; align-items: center; justify-content: center; background: #4b4b4b; }

/* browser */
.chrome { position: absolute; left: 0; top: 50px; width: 2180px; height: 1624px; border-radius: 20px; overflow: hidden; display: flex; flex-direction: column; background: #fff; color: #202124; box-shadow: 0 0 0 1.500px #000, 0 36px 100px rgba(0, 0, 0, .7); }
.chrome::after { content: ""; position: absolute; inset: 0; border-radius: 20px; box-shadow: inset 0 2px 0 rgba(255, 255, 255, .35); pointer-events: none; }
.strip { height: 84px; background: #fbdf74; display: flex; align-items: flex-end; }
.lights { display: flex; gap: 16px; margin: 0 0 29px 42px; width: 168px; }
.lights i { width: 24px; height: 24px; border-radius: 50%; background: #ec6b5f; }
.lights i:nth-child(2) { background: #f4be50; }
.lights i:nth-child(3) { background: #62c655; }
.tab { display: flex; align-items: center; height: 68px; font-size: 24px; white-space: nowrap; position: relative; }
.tab span { line-height: 68px; }
.t1 { width: 455px; }
.t1 span { width: 352px; margin-left: 17px; -webkit-mask-image: linear-gradient(90deg, #000 310px, transparent 352px); mask-image: linear-gradient(90deg, #000 310px, transparent 352px); }
.t1 .x { margin-left: 14px; }
.t1::after { content: ""; position: absolute; right: -1px; top: 14px; width: 2px; height: 41px; background: #8b7d45; }
.t2 { width: 477px; padding-left: 23px; }
.t2 span { width: 367px; margin-left: 16px; letter-spacing: -.03px; }
.t3 { width: 480px; padding-left: 26px; background: #fff; border-radius: 16px 16px 0 0; }
.t3 span { width: 367px; margin-left: 18px; letter-spacing: -.13px; }
.t3::before, .t3::after { content: ""; position: absolute; bottom: 0; width: 16px; height: 16px; background: radial-gradient(circle at 0 0, transparent 15.500px, #fff 16px); left: -16px; }
.t3::after { left: auto; right: -16px; background: radial-gradient(circle at 100% 0, transparent 15.500px, #fff 16px); }
.plus { margin: 0 0 22px 32px; }
.chev { margin: 0 0 27px 448px; }
.tools { height: 72px; display: flex; align-items: center; padding-left: 30px; }
.b-fwd { margin-left: 37px; }
.b-re { margin-left: 35px; }
.omni { width: 1684px; height: 56px; border-radius: 28px; margin-left: 30px; background: #e1e1e1; display: flex; align-items: center; padding-left: 27px; }
.url { width: 1505px; margin-left: 23px; font-size: 28px; letter-spacing: -.17px; }
.url i { color: #5f6368; }
.star { margin-left: 37px; }
.puz { margin-left: 30px; }
.side { margin-left: 36px; }
.ava { width: 44px; height: 44px; border-radius: 50%; margin-left: 28px; background: #20242b; display: flex; flex-direction: column; align-items: center; justify-content: center; overflow: hidden; white-space: nowrap; }
.ava b { font: 400 24px/22px "Liberation Serif", serif; color: #e06a35; margin-top: -2px; }
.ava i { font-size: 4.400px; line-height: 6px; color: #3f86c4; }
.kebab { margin-left: 39px; }
.bookmarks { height: 66px; border-bottom: 2px solid #ccc; }
.page { flex: 1; display: flex; flex-direction: column; font-family: "Noto Sans", "Open Sans", sans-serif; color: #333; }
.page h1 { height: 120px; line-height: 97px; padding-left: 808px; font-size: 48px; font-weight: 600; letter-spacing: -1.180px; }
.page nav { height: 50px; line-height: 36px; background: #eee; color: #000; padding-left: 808px; font-size: 28px; font-weight: 600; letter-spacing: -.280px; white-space: pre; }
.cols { flex: 1; display: flex; }
.cols aside { width: 440px; background: #eee; padding: 34px 0 0 20px; }
h4 { font-size: 24px; line-height: 40px; letter-spacing: 6.300px; font-weight: 600; }
.cols ul { margin: 22px 0 0 80px; font-size: 24px; line-height: 36px; letter-spacing: -.85px; list-style: none; color: #000; font-weight: 500; }
.cols li { display: flex; align-items: center; margin-left: -22px; gap: 13px; }
.cols li:first-child { letter-spacing: -.5px; }
.cols li::before { content: ""; width: 8px; height: 8px; border-radius: 50%; background: #333; }
main { flex: 1; padding: 77px 0 0 70px; }
h2 { font-size: 48px; line-height: 66px; font-weight: 600; letter-spacing: -1.300px; }
.table { width: 842px; height: 140px; margin-top: 17px; border: 2px solid #ccc; padding: 4px 4px 0; }
.thead { display: grid; grid-template-columns: 115px 92px 89px 109px 409px; column-gap: 4px; }
.thead b { height: 68px; border-top: 10px solid #eee; border-bottom: 2px solid #ccc; padding-left: 10px; font-size: 24px; line-height: 55px; font-weight: 600; letter-spacing: 3.400px; word-spacing: 5px; color: #000; white-space: nowrap; }
.empty { padding-left: 10px; font-size: 24px; line-height: 65px; letter-spacing: -.6px; }
footer { font-size: 24px; line-height: 36px; margin-top: 20px; letter-spacing: -.85px; }
footer a { color: #000; font-weight: 500; }

/* dock */
.dock { position: absolute; left: 78px; top: 1678px; width: 2726px; height: 112px; border-radius: 30px; border: 2px solid rgba(255, 255, 255, .2); background: linear-gradient(90deg, #37291d, #3a2a1c 18%, #42291a 24%, #341a19 28%, #36201f 38%, #3a1f1e 50%, #4a1f20 58%, #3b2423 64%, #33292a 68%, #3f2a1e 74%, #4c321f 80%, #4a301f 90%, #482d1c); background-clip: padding-box; box-shadow: 0 0 60px rgba(0, 0, 0, .3), 0 0 0 1px rgba(0, 0, 0, .4); display: flex; padding: 15px 0 0 13px; gap: 22px; }
.defs { position: absolute; }
.app { position: relative; width: 72px; height: 72px; filter: drop-shadow(0 1px 2px rgba(0, 0, 0, .35)); font-family: Inter, sans-serif; }
.app svg { width: auto; height: 72px; }
.app.run::after { content: ""; position: absolute; left: 32px; top: 83px; width: 8px; height: 8px; border-radius: 50%; background: #cbb2a0; }
.petals ellipse { mix-blend-mode: multiply; opacity: .88; }
.badge { position: absolute; left: 47px; top: -9px; width: 34px; height: 34px; border-radius: 50%; background: #e8513e; color: #fff; font-style: normal; font-size: 20px; line-height: 34px; text-align: center; }
.bar { width: 2px; height: 84px; background: #8a7361; }
.b1 { margin: -3px 10px 0 8px; }
.b2 { margin: -3px 5px 0 9px; }
.mini { position: relative; width: 84px; height: 72px; padding-top: 12px; margin-left: -2px; }
.gh { position: absolute; left: 55px; top: 50px; }
.trash { margin: -8px 0 0 -4px; }
</style>
